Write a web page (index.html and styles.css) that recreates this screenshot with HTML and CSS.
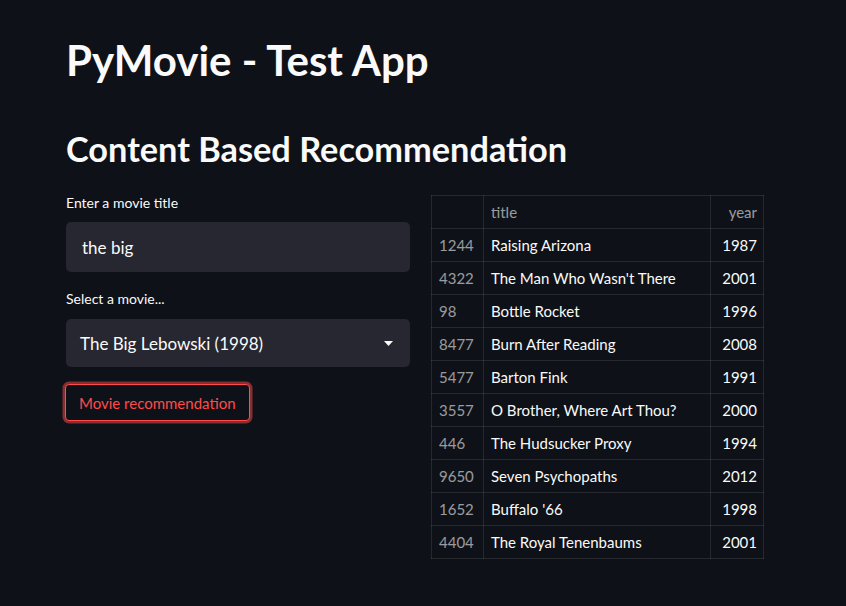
FILE: index.html
```html
<!DOCTYPE html>
<html>
<head>
<meta charset="utf-8">
<link rel="stylesheet" href="styles.css">
</head>
<body>
<div class="main">
  <h1 class="title">PyMovie - Test App</h1>
  <h2 class="subtitle">Content Based Recommendation</h2>
  <div class="columns">
    <div class="col-left">
      <label class="label">Enter a movie title</label>
      <div class="input">the big</div>
      <label class="label label-select">Select a movie...</label>
      <div class="select">
        <span>The Big Lebowski (1998)</span>
        <svg class="caret" width="9" height="5" viewBox="0 0 9 5"><path d="M0 0 L9 0 L4.5 5 Z" fill="#fafafa"/></svg>
      </div>
      <button class="btn">Movie recommendation</button>
    </div>
    <table class="table">
      <thead>
        <tr><th class="idx"></th><th class="t">title</th><th class="y">year</th></tr>
      </thead>
      <tbody>
        <tr><td class="idx">1244</td><td class="t">Raising Arizona</td><td class="y">1987</td></tr>
        <tr><td class="idx">4322</td><td class="t">The Man Who Wasn't There</td><td class="y">2001</td></tr>
        <tr><td class="idx">98</td><td class="t">Bottle Rocket</td><td class="y">1996</td></tr>
        <tr><td class="idx">8477</td><td class="t">Burn After Reading</td><td class="y">2008</td></tr>
        <tr><td class="idx">5477</td><td class="t">Barton Fink</td><td class="y">1991</td></tr>
        <tr><td class="idx">3557</td><td class="t">O Brother, Where Art Thou?</td><td class="y">2000</td></tr>
        <tr><td class="idx">446</td><td class="t">The Hudsucker Proxy</td><td class="y">1994</td></tr>
        <tr><td class="idx">9650</td><td class="t">Seven Psychopaths</td><td class="y">2012</td></tr>
        <tr><td class="idx">1652</td><td class="t">Buffalo '66</td><td class="y">1998</td></tr>
        <tr><td class="idx">4404</td><td class="t">The Royal Tenenbaums</td><td class="y">2001</td></tr>
      </tbody>
    </table>
  </div>
</div>
</body>
</html>
```
FILE: styles.css
```css
html, body {
  margin: 0;
  padding: 0;
  background: #0e1117;
  color: #fafafa;
  font-family: Lato, "Open Sans", sans-serif;
}
.main {
  padding: 35px 0 0 66px;
  width: 704px;
}
.title {
  margin: 0;
  font-size: 42px;
  line-height: 50px;
  font-weight: 700;
}
.subtitle {
  margin: 44px 0 0 0;
  font-size: 34.3px;
  line-height: 40px;
  font-weight: 700;
}
.columns {
  display: flex;
  gap: 21px;
  margin-top: 26px;
  align-items: flex-start;
}
.col-left {
  width: 344px;
  display: flex;
  flex-direction: column;
  align-items: flex-start;
}
.label {
  font-size: 14px;
  line-height: 18px;
  margin-top: -1px;
}
.label-select {
  margin-top: 18px;
}
.input, .select {
  box-sizing: border-box;
  width: 344px;
  height: 50px;
  background: #262730;
  border-radius: 5px;
  margin-top: 10px;
  font-size: 17px;
  display: flex;
  align-items: center;
}
.input {
  padding-left: 16px;
}
.select {
  padding: 0 17px 0 14px;
  justify-content: space-between;
  height: 48px;
  margin-top: 11px;
}
.caret {
  display: block;
}
.btn {
  margin-top: 17px;
  margin-left: -1px;
  height: 37px;
  padding: 0 13px;
  background: #0e1117;
  color: #ff4b4b;
  border: 1px solid #ff4b4b;
  border-radius: 4px;
  box-shadow: 0 0 0 2.5px rgba(255, 75, 75, 0.5);
  font-family: inherit;
  font-size: 15px;
}
.table {
  border-collapse: collapse;
  border: 1px solid rgba(250, 250, 250, 0.1);
  font-size: 15px;
  margin-top: 0;
}
.table th, .table td {
  border: 1px solid rgba(250, 250, 250, 0.1);
  height: 33px;
  padding: 0 6px 0 7px;
  box-sizing: border-box;
}
.table th {
  font-weight: 400;
  color: rgba(250, 250, 250, 0.6);
  text-align: left;
}
.table .idx {
  width: 52px;
  color: rgba(250, 250, 250, 0.6);
}
.table .t {
  width: 227px;
}
.table .y {
  width: 53px;
  text-align: right;
}
```
